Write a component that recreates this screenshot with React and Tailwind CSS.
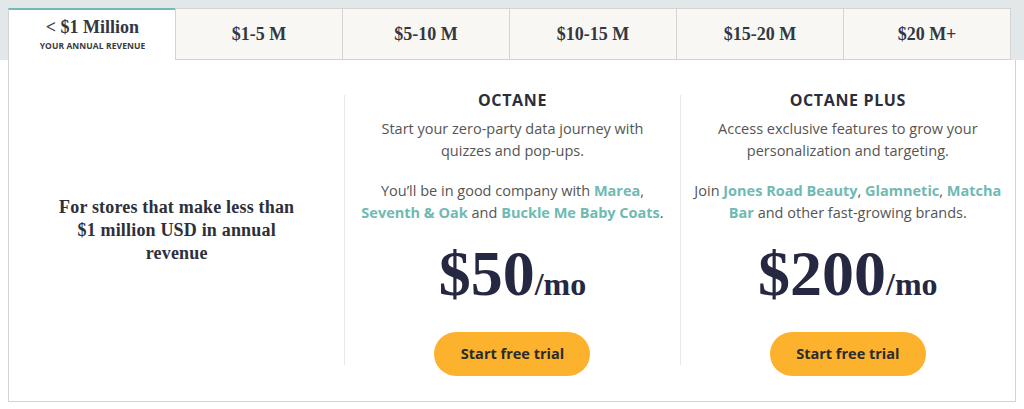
import React from "react";

const serif = { fontFamily: '"Liberation Serif", "Times New Roman", serif' };
const sans = { fontFamily: '"Open Sans", "Noto Sans", sans-serif' };

const tabs = ["$1-5 M", "$5-10 M", "$10-15 M", "$15-20 M", "$20 M+"];

function Brand({ children }) {
  return <span className="font-bold text-[#6fbab2]">{children}</span>;
}

function Plan({ title, desc, company, price, pad }) {
  return (
    <div className={"mt-[35px] h-[270px] border-l border-[#e8e8e8] flex flex-col items-center text-center " + pad}>
      <div className="-mt-[7px] text-[16px] leading-[24px] font-bold tracking-[0.04em] text-[#2b2d3a]" style={sans}>
        {title}
      </div>
      <p className="mt-[6px] text-[14.5px] leading-[22px] text-[#555555]" style={sans}>{desc}</p>
      <p className="mt-[18px] text-[14.5px] leading-[22px] text-[#555555]" style={sans}>{company}</p>
      <div className="mt-[18px] flex items-baseline text-[#262842] font-bold" style={serif}>
        <span className="text-[64px] leading-[64px]">{price}</span>
        <span className="text-[32px] leading-[32px]">/mo</span>
      </div>
      <button
        className="mt-[26px] w-[156px] h-[44px] shrink-0 rounded-full bg-[#fcb22d] text-[14.5px] font-bold text-[#2b2b2b]"
        style={sans}
      >
        Start free trial
      </button>
    </div>
  );
}

export default function App() {
  return (
    <div className="w-full h-[409px] bg-white overflow-hidden">
      <div className="bg-[#e2e8ea] pt-[8px] px-[8px]">
        <div className="flex">
          <div className="w-[168px] h-[52px] bg-white border-t-2 border-t-[#74b8b8] border-l border-[#d3d3d3] flex flex-col items-center justify-center">
            <div className="text-[18px] leading-[22px] font-bold text-[#343741] -mt-[3px]" style={serif}>
              &lt; $1 Million
            </div>
            <div className="text-[8.5px] leading-[11px] font-bold text-[#3a3a3a] tracking-[0.01em] mt-[2px]" style={sans}>
              YOUR ANNUAL REVENUE
            </div>
          </div>
          {tabs.map((t) => (
            <div
              key={t}
              className="w-[168px] h-[52px] bg-[#f8f7f4] border border-[#d3d3d3] -ml-px first:ml-0 flex items-center justify-center"
            >
              <span className="text-[18px] font-bold text-[#343741]" style={serif}>{t}</span>
            </div>
          ))}
        </div>
      </div>
      <div className="mx-[8px] h-[342px] border-x border-b border-[#d3d3d3] grid grid-cols-3">
        <div className="flex items-center justify-center">
          <p className="w-[250px] text-center text-[18px] leading-[23px] font-bold tracking-[0.01em] text-[#2d2f3b]" style={serif}>
            For stores that make less than $1 million USD in annual revenue
          </p>
        </div>
        <Plan
          pad="px-[14px]"
          title="OCTANE"
          desc="Start your zero-party data journey with quizzes and pop-ups."
          company={
            <>
              You’ll be in good company with <Brand>Marea</Brand>, <Brand>Seventh &amp; Oak</Brand> and{" "}
              <Brand>Buckle Me Baby Coats</Brand>.
            </>
          }
          price="$50"
        />
        <Plan
          pad="px-[8px]"
          title="OCTANE PLUS"
          desc="Access exclusive features to grow your personalization and targeting."
          company={
            <>
              Join <Brand>Jones Road Beauty</Brand>, <Brand>Glamnetic</Brand>, <Brand>Matcha Bar</Brand> and other
              fast-growing brands.
            </>
          }
          price="$200"
        />
      </div>
    </div>
  );
}
